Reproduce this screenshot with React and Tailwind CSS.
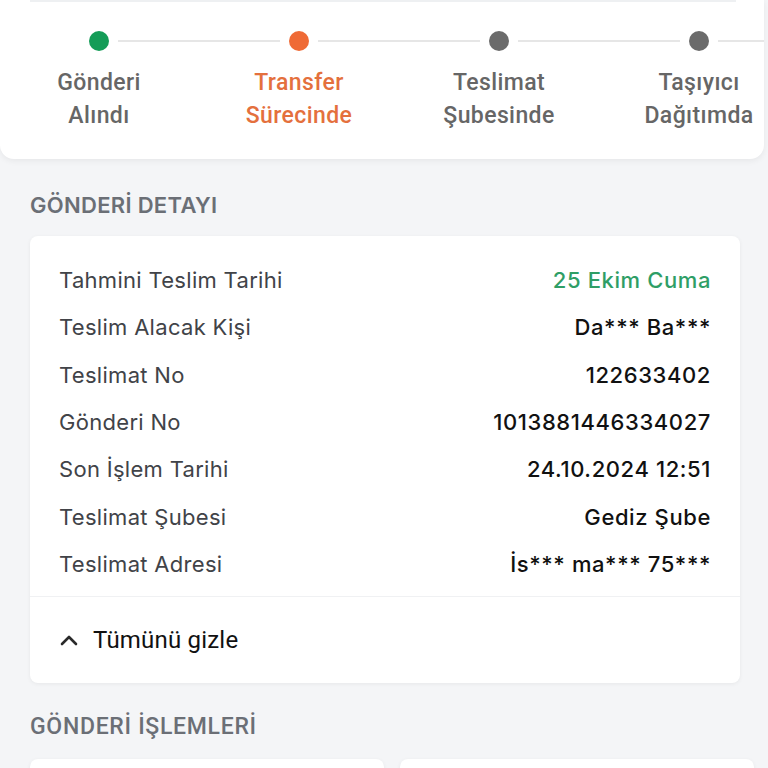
import React from "react";

const steps = [
  { l1: "Gönderi", l2: "Alındı", dot: "bg-[#149c57]", text: "text-[#666666]", first: true },
  { l1: "Transfer", l2: "Sürecinde", dot: "bg-[#ef6a35]", text: "text-[#e4703d]" },
  { l1: "Teslimat", l2: "Şubesinde", dot: "bg-[#6b6b6b]", text: "text-[#666666]" },
  { l1: "Taşıyıcı", l2: "Dağıtımda", dot: "bg-[#6b6b6b]", text: "text-[#666666]" },
];

const rows = [
  ["Tahmini Teslim Tarihi", "25 Ekim Cuma", true],
  ["Teslim Alacak Kişi", "Da*** Ba***"],
  ["Teslimat No", "122633402"],
  ["Gönderi No", "1013881446334027"],
  ["Son İşlem Tarihi", "24.10.2024 12:51"],
  ["Teslimat Şubesi", "Gediz Şube"],
  ["Teslimat Adresi", "İs*** ma*** 75***"],
];

export default function App() {
  return (
    <div className="w-[768px] h-[768px] overflow-hidden bg-[#f4f5f7] font-['Inter',sans-serif]">
      {/* stepper card */}
      <div className="w-[764px] h-[159px] bg-white rounded-b-[14px] shadow-[0_2px_6px_rgba(0,0,0,0.06)] overflow-hidden">
        <div className="h-[2px] ml-[30px] w-[706px] bg-[#eef0f2]" />
        <div className="flex ml-[-1px] mt-[29px]">
          {steps.map((s, i) => (
            <div key={i} className="w-[200px] shrink-0 flex flex-col items-center">
              <div className="w-full flex items-center gap-[9px]">
                <div className={`flex-1 h-[2px] ${s.first ? "bg-transparent" : "bg-[#e6e6e6]"}`} />
                <div className={`w-[20px] h-[20px] rounded-full ${s.dot}`} />
                <div className="flex-1 h-[2px] bg-[#e6e6e6]" />
              </div>
              <div className={`mt-[15px] text-center font-['Roboto',sans-serif] font-medium text-[23px] tracking-[0.4px] leading-[33px] whitespace-nowrap ${s.text}`}>
                <div>{s.l1}</div>
                <div>{s.l2}</div>
              </div>
            </div>
          ))}
        </div>
      </div>

      {/* detail section */}
      <div className="ml-[30px] mt-[32px] text-[22px] tracking-[0.3px] leading-[28px] font-semibold text-[#6b6f76]">
        GÖNDERİ DETAYI
      </div>
      <div className="ml-[30px] mt-[17px] w-[710px] bg-white rounded-[8px] shadow-[0_1px_4px_rgba(0,0,0,0.06)]">
        <div className="pt-[21px] pb-[8px]">
          {rows.map(([k, v, green], i) => (
            <div key={i} className="h-[47.3px] flex items-center justify-between pl-[29px] pr-[29px] text-[22px]">
              <span className="text-[#414348] tracking-[0.3px]">{k}</span>
              <span className={`font-medium tracking-[0.6px] ${green ? "text-[#2f9e66]" : "text-[#111111]"}`}>{v}</span>
            </div>
          ))}
        </div>
        <div className="h-[1px] bg-[#f0f1f3]" />
        <div className="h-[86px] flex items-center pl-[30px] gap-[15px]">
          <svg width="18" height="12" viewBox="0 0 18 12" fill="none">
            <path d="M2 10 L9 3 L16 10" stroke="#2a2a2a" strokeWidth="2.6" strokeLinecap="round" strokeLinejoin="round" />
          </svg>
          <span className="font-['Roboto',sans-serif] text-[24px] tracking-[0.2px] text-[#111111]">Tümünü gizle</span>
        </div>
      </div>

      {/* operations */}
      <div className="ml-[30px] mt-[30px] font-['Roboto',sans-serif] text-[23px] tracking-[0.7px] leading-[28px] font-medium text-[#6b6f76]">
        GÖNDERİ İŞLEMLERİ
      </div>
      <div className="ml-[30px] mt-[18px] flex gap-[16px]">
        <div className="w-[354px] h-[60px] bg-white rounded-[8px] shrink-0 shadow-[0_1px_4px_rgba(0,0,0,0.06)]" />
        <div className="w-[354px] h-[60px] bg-white rounded-[8px] shrink-0 shadow-[0_1px_4px_rgba(0,0,0,0.06)]" />
      </div>
    </div>
  );
}
